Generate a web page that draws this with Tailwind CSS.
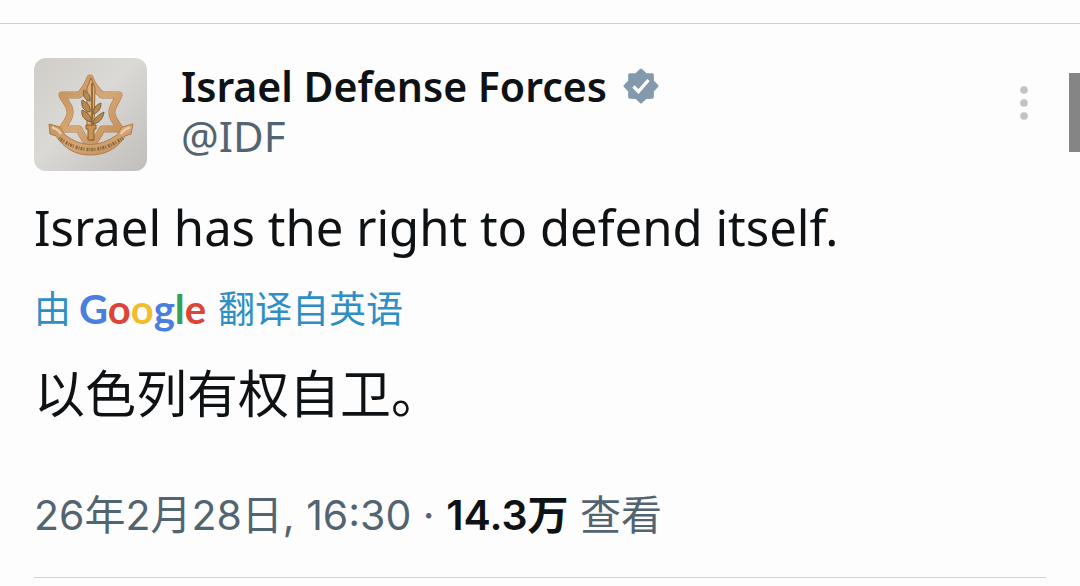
<!DOCTYPE html>
<html lang="zh-CN">
<head>
  <meta charset="UTF-8">
  <meta name="viewport" content="width=device-width, initial-scale=1.0">
  <title>Israel Defense Forces</title>
  <script src="https://cdn.jsdelivr.net/npm/@tailwindcss/browser@4"></script>
</head>
<body class="relative min-h-screen overflow-x-hidden bg-[#fdfdfd] pt-[23px] font-['Noto_Sans','Noto_Sans_CJK_SC',sans-serif] text-[#0f1214]">
  <main class="border-t border-[#cfcfcf] px-[34px] pt-[34px]">
    <article class="border-b border-[#d2d4d6] pb-8">
      <header class="flex items-start">
        <svg class="size-[113px] shrink-0 rounded-xl" viewBox="0 0 113 113" role="img" aria-label="IDF">
          <defs>
            <linearGradient id="plate" x1="0" y1="0" x2="1" y2="1">
              <stop offset="0" stop-color="#d0cdc7" />
              <stop offset=".45" stop-color="#dbd9d6" />
              <stop offset="1" stop-color="#c0bdba" />
            </linearGradient>
            <linearGradient id="gold" x1="0" y1="0" x2="1" y2="1">
              <stop offset="0" stop-color="#c4935c" />
              <stop offset=".5" stop-color="#d6a878" />
              <stop offset="1" stop-color="#c08a55" />
            </linearGradient>
          </defs>
          <rect width="113" height="113" fill="url(#plate)" />
          <!-- star -->
          <g fill="none" stroke-linejoin="round">
            <path d="M56 20C53 28 50 33 45 37H28C32 46 37 48 36 56C35 62 31 66 28 71H45C49 79 52 84 56 88C61 84 64 79 68 71H86C83 65 79 62 78 56C77 48 82 46 85 37H68C63 33 59 28 56 20Z" stroke="#b07c48" stroke-width="7" />
            <path d="M56 20C53 28 50 33 45 37H28C32 46 37 48 36 56C35 62 31 66 28 71H45C49 79 52 84 56 88C61 84 64 79 68 71H86C83 65 79 62 78 56C77 48 82 46 85 37H68C63 33 59 28 56 20Z" stroke="url(#gold)" stroke-width="6" />
          </g>
          <!-- ribbon -->
          <path d="M15 66L26 69L31 77Q56 96 83 77L88 69L99 66L97 76L91 78C84 90 72 97 56 97C41 97 30 90 22 78L16 76Z" fill="url(#gold)" stroke="#b27a45" />
          <path d="M18 69C22 72 25 71 27 76M96 69C92 72 89 71 87 76" fill="none" stroke="#ebcda5" stroke-width="2.5" />
          <path d="M25 80Q56 103 89 80" fill="none" stroke="#8a6a40" stroke-width="3.5" stroke-dasharray="1 1 2 1 1 2 2 1" />
          <!-- sword and olive branch -->
          <path d="M57 20L61 30L60 68H53V30Z" fill="#e0b27b" stroke="#9a6c38" />
          <path d="M58 25L58 83" stroke="#7c592e" stroke-width="1.5" />
          <path d="M52 67H62V71H60V82H54V71H52Z" fill="#c8924f" stroke="#8b5b2b" />
          <g fill="#b98a50" stroke="#7b6038">
            <path d="M56 43C51 42 48 38 50 32C54 35 57 38 56 43Z" />
            <path d="M56 54C49 53 47 48 48 42C54 45 57 49 56 54Z" />
            <path d="M57 64C50 62 47 58 48 52C54 55 58 58 57 64Z" />
            <path d="M59 56C64 55 67 51 67 45C62 47 59 50 59 56Z" />
            <path d="M59 66C65 65 69 61 70 54C64 57 60 60 59 66Z" />
          </g>
        </svg>
        <div class="ml-[34px] min-w-0 flex-1">
          <div class="flex items-center gap-4">
            <h1 class="text-[41px] leading-[56px] font-semibold whitespace-nowrap">Israel Defense Forces</h1>
            <svg class="size-9 shrink-0" viewBox="0 0 36 36" role="img" aria-label="认证账号">
              <path d="M18 2L22.7 6.6L29.3 6.7L29.4 13.3L34 18L29.4 22.7L29.3 29.3L22.7 29.4L18 34L13.3 29.4L6.7 29.3L6.6 22.7L2 18L6.6 13.3L6.7 6.7L13.3 6.6Z" fill="#829aab" stroke="#829aab" stroke-width="3" stroke-linejoin="round" />
              <path d="M10.5 18.5L15.5 23.5L25.5 12" fill="none" stroke="#fff" stroke-width="3.4" />
            </svg>
          </div>
          <a href="#" class="block w-fit text-[42px] leading-[44px] text-[#536471]">@IDF</a>
        </div>
        <button type="button" aria-label="更多" class="mt-7 mr-[18px]">
          <svg class="h-9 w-2" viewBox="0 0 8 36" fill="#c0c4c4">
            <circle cx="4" cy="4" r="3.8" />
            <circle cx="4" cy="17" r="3.8" />
            <circle cx="4" cy="30" r="3.8" />
          </svg>
        </button>
      </header>

      <p class="mt-6 text-[49px] leading-[64px]">Israel has the right to defend itself.</p>
      <a href="#" class="mt-5 flex w-fit items-center gap-2 text-[37px] leading-[60px] text-[#2f8fc4]">
        <span>由</span>
        <span class="pr-1 font-['Lato',sans-serif] text-[40px] font-bold"><span class="text-[#4a7fe0]">G</span><span class="text-[#dc4437]">o</span><span class="text-[#f0bd2e]">o</span><span class="text-[#4a7fe0]">g</span><span class="text-[#36a156]">l</span><span class="text-[#dc4437]">e</span></span>
        <span>翻译自英语</span>
      </a>
      <p lang="zh-CN" class="mt-4 text-[51px] leading-[76px]">以色列有权自卫。</p>
      <p class="mt-[54px] font-['Inter','Noto_Sans_CJK_SC',sans-serif] text-[41px] leading-[60px] text-[#536471]">26年2月28日, 16:30 · <a href="#" class="font-semibold text-[#0f1214]">14.3万</a> 查看</p>
    </article>
  </main>
  <div class="absolute top-[73px] right-0 h-[79px] w-[11px] bg-[#858585]"></div>
</body>
</html>
